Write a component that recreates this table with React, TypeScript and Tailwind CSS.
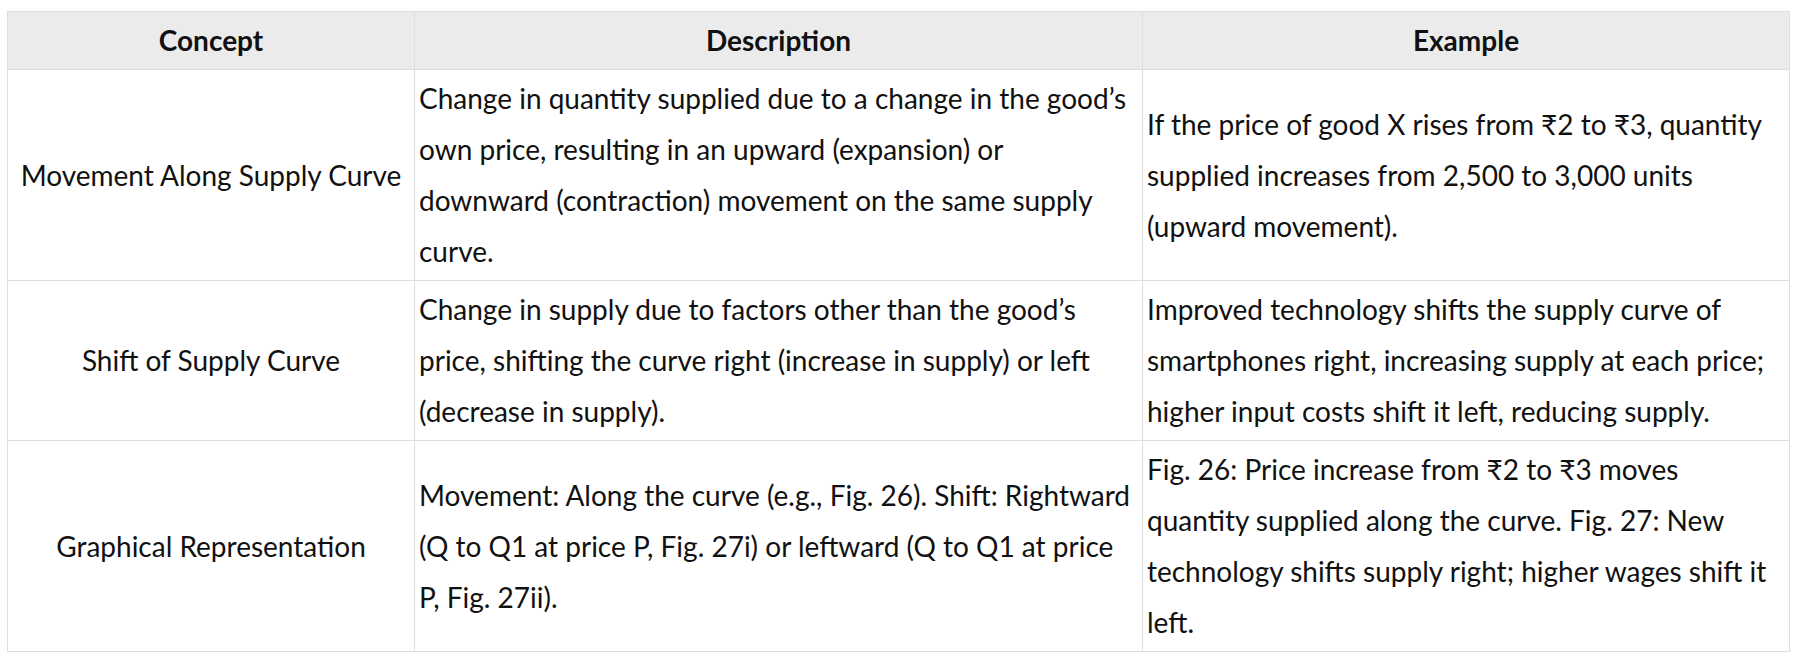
const rows = [
  {
    concept: 'Movement Along Supply Curve',
    description:
      'Change in quantity supplied due to a change in the good\u2019s own price, resulting in an upward (expansion) or downward (contraction) movement on the same supply curve.',
    example:
      'If the price of good X rises from \u20b92 to \u20b93, quantity supplied increases from 2,500 to 3,000 units (upward movement).',
  },
  {
    concept: 'Shift of Supply Curve',
    description:
      'Change in supply due to factors other than the good\u2019s price, shifting the curve right (increase in supply) or left (decrease in supply).',
    example:
      'Improved technology shifts the supply curve of smartphones right, increasing supply at each price; higher input costs shift it left, reducing supply.',
  },
  {
    concept: 'Graphical Representation',
    description:
      'Movement: Along the curve (e.g., Fig. 26). Shift: Rightward (Q to Q1 at price P, Fig. 27i) or leftward (Q to Q1 at price P, Fig. 27ii).',
    example:
      'Fig. 26: Price increase from \u20b92 to \u20b93 moves quantity supplied along the curve. Fig. 27: New technology shifts supply right; higher wages shift it left.',
  },
];

export default function App() {
  return (
    <div className="min-h-[662px] bg-white pl-[7px] pr-[8px] pt-[11px] font-['Lato','Noto_Sans',sans-serif] text-[28px] leading-[51px] text-[#111]">
      <table className="w-full table-fixed border-collapse border border-[#dedede]">
        <colgroup>
          <col className="w-[407px]" />
          <col className="w-[728px]" />
          <col />
        </colgroup>
        <thead>
          <tr className="bg-[#ebebeb]">
            <th className="border border-[#dedede] px-[4px] py-[3px] text-center font-bold">Concept</th>
            <th className="border border-[#dedede] px-[4px] py-[3px] text-center font-bold">Description</th>
            <th className="border border-[#dedede] px-[4px] py-[3px] text-center font-bold">Example</th>
          </tr>
        </thead>
        <tbody>
          {rows.map((row) => (
            <tr key={row.concept}>
              <td className="border border-[#dedede] px-[4px] py-[3px] text-center align-middle">{row.concept}</td>
              <td className="border border-[#dedede] px-[4px] py-[3px] text-left align-middle">{row.description}</td>
              <td className="border border-[#dedede] px-[4px] py-[3px] text-left align-middle">{row.example}</td>
            </tr>
          ))}
        </tbody>
      </table>
    </div>
  );
}
